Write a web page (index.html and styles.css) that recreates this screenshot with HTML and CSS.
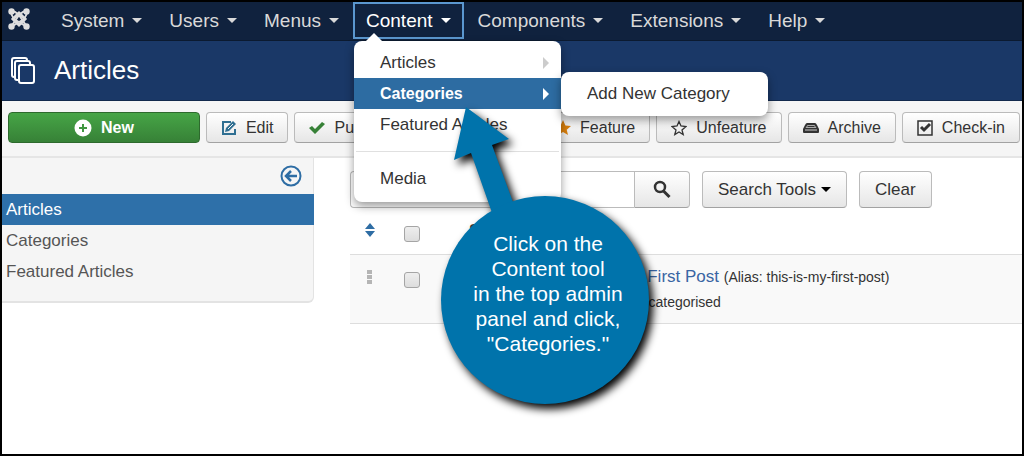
FILE: index.html
```html
<!DOCTYPE html>
<html lang="en">
<head>
    <meta charset="UTF-8">
    <meta name="viewport" content="width=device-width, initial-scale=1.0">
    <title>Articles</title>
    <link rel="stylesheet" href="styles.css">
</head>
<body>
    <nav class="navbar">
        <a href="#" class="brand" aria-label="Joomla">
            <svg width="24" height="24" viewBox="0 0 24 24" fill="none" stroke="#dedede">
                <path d="M4 4q4 0 8 4l8 12M20 4q-4 0-8 4l-8 12M4 4q0 4 3 8l13 8M20 4q0 4-3 8l-13 8" stroke-width="2"/>
                <path d="M12 6l6 6-6 6-6-6z" stroke-width="3"/>
                <g fill="#dedede" stroke="none">
                    <circle cx="4.500" cy="4.500" r="3.200"/>
                    <circle cx="19.500" cy="4.500" r="3.200"/>
                    <circle cx="4.500" cy="19.500" r="3.200"/>
                    <circle cx="19.500" cy="19.500" r="3.200"/>
                </g>
            </svg>
        </a>
        <ul class="nav">
            <li><a href="#" class="nav-link">System<span class="caret"></span></a></li>
            <li><a href="#" class="nav-link">Users<span class="caret"></span></a></li>
            <li><a href="#" class="nav-link">Menus<span class="caret"></span></a></li>
            <li class="open">
                <a href="#" class="nav-link">Content<span class="caret"></span></a>
                <ul class="dropdown">
                    <li><a href="#">Articles<span class="arrow"></span></a></li>
                    <li class="active">
                        <a href="#">Categories<span class="arrow"></span></a>
                        <ul class="submenu">
                            <li><a href="#">Add New Category</a></li>
                        </ul>
                    </li>
                    <li><a href="#">Featured Articles</a></li>
                    <li class="divider"></li>
                    <li><a href="#">Media</a></li>
                </ul>
            </li>
            <li><a href="#" class="nav-link">Components<span class="caret"></span></a></li>
            <li><a href="#" class="nav-link">Extensions<span class="caret"></span></a></li>
            <li><a href="#" class="nav-link">Help<span class="caret"></span></a></li>
        </ul>
    </nav>

    <header class="header">
        <svg width="26" height="28" viewBox="0 0 26 28" fill="#1a3867" stroke="#fff" stroke-width="2">
            <rect x="2" y="1" width="15" height="19" rx="2"/>
            <rect x="5" y="4" width="15" height="19" rx="2"/>
            <rect x="9" y="8" width="15" height="18" rx="2"/>
        </svg>
        <h1>Articles</h1>
    </header>

    <div class="toolbar">
        <button class="btn btn-new">
            <svg width="18" height="18" viewBox="0 0 18 18"><circle cx="9" cy="9" r="8.500" fill="#fff"/><path d="M9 5v8M5 9h8" stroke="#409740" stroke-width="2"/></svg>
            New
        </button>
        <button class="btn">
            <svg width="16" height="16" viewBox="0 0 16 16" fill="none" stroke="#2f6f92" stroke-width="2"><path d="M10 2H2v12h12V9"/><path d="M4 12l1-4 7-7 3 3-7 7z" fill="#2f6f92" stroke="none"/><path d="M7 9l5-5" stroke="#f5f5f5" stroke-width="1"/></svg>
            Edit
        </button>
        <button class="btn">
            <svg width="16" height="16" viewBox="0 0 16 16"><path d="M0 8l3-2 3 3 7-7 3 2-10 10z" fill="#378137"/></svg>
            Publish
        </button>
        <button class="btn">
            <svg width="16" height="16" viewBox="0 0 16 16"><path d="M3 3l10 10M13 3L3 13" stroke="#bd362f" stroke-width="3"/></svg>
            Unpublish
        </button>
        <button class="btn">
            <svg width="16" height="16" viewBox="0 0 16 16"><path d="M8 0l2.400 5.500 5.600.500-4.300 3.700 1.300 5.300-5-3-5 3 1.300-5.300L0 6l5.600-.500z" fill="#d97f0c"/></svg>
            Feature
        </button>
        <button class="btn">
            <svg width="16" height="16" viewBox="0 0 16 16"><path d="M8 1.500l2 4.500 5 .500-4 3.500 1.200 4.500L8 12l-4.200 2.500L5 10 1 6.500 6 6z" fill="none" stroke="#333" stroke-width="1.300"/></svg>
            Unfeature
        </button>
        <button class="btn">
            <svg width="16" height="16" viewBox="0 0 16 16"><path d="M4 3h8q1 0 2 2l2 4v3q0 1-1 1H1q-1 0-1-1V9l2-4q1-2 2-2z" fill="#333"/><path d="M4.500 5h7l2 3h-11z" fill="#aaa"/><path d="M4.500 6.500h7" stroke="#333" stroke-width="1"/><path d="M2 10h12" stroke="#ccc" stroke-width="1"/></svg>
            Archive
        </button>
        <button class="btn">
            <svg width="16" height="16" viewBox="0 0 16 16" fill="none" stroke="#333"><rect x="1" y="1" width="14" height="14" stroke-width="1.500"/><path d="M4 7l3 3 6-6" stroke-width="3"/></svg>
            Check-in
        </button>
    </div>

    <div class="content">
        <aside class="sidebar">
            <button class="toggle" aria-label="Hide sidebar">
                <svg width="22" height="22" viewBox="0 0 22 22" fill="none" stroke="#2e6da4"><circle cx="11" cy="11" r="9.500" stroke-width="2"/><path d="M17 11H6M11 6l-5 5 5 5" stroke-width="2.500"/></svg>
            </button>
            <ul>
                <li class="active"><a href="#">Articles</a></li>
                <li><a href="#">Categories</a></li>
                <li><a href="#">Featured Articles</a></li>
            </ul>
        </aside>

        <main class="main">
            <form class="filters">
                <div class="search">
                    <input type="text" aria-label="Search">
                    <button type="button" class="btn" aria-label="Search">
                        <svg width="20" height="20" viewBox="0 0 20 20" fill="none" stroke="#333"><circle cx="8" cy="7" r="5" stroke-width="2.500"/><path d="M11.500 11l6 6" stroke-width="3"/></svg>
                    </button>
                </div>
                <button type="button" class="btn">Search Tools<span class="caret"></span></button>
                <button type="button" class="btn">Clear</button>
            </form>

            <table class="articles">
                <thead>
                    <tr>
                        <th class="col-order"><svg width="10" height="14" viewBox="0 0 10 14" fill="#2e6da4"><path d="M5 0l5 6H0zM5 14l5-6H0z"/></svg></th>
                        <th class="col-check"><input type="checkbox" aria-label="Check all"></th>
                        <th class="col-status">Status</th>
                        <th>Title</th>
                    </tr>
                </thead>
                <tbody>
                    <tr>
                        <td class="col-order"><svg width="6" height="16" viewBox="0 0 6 16" fill="#b5b5b5"><path d="M0 1h5v4H0zM0 6h5v4H0zM0 11h5v4H0z"/></svg></td>
                        <td class="col-check"><input type="checkbox" aria-label="Check article"></td>
                        <td class="col-status"></td>
                        <td>
                            <a href="#">This is My First Post</a> <small>(Alias: this-is-my-first-post)</small>
                            <div class="category">Category: Uncategorised</div>
                        </td>
                    </tr>
                </tbody>
            </table>
        </main>
    </div>

    <!-- Tutorial callout -->
    <div class="callout">
        <svg class="callout-shape" width="230" height="320" viewBox="0 0 230 320">
            <g fill="#0073ab">
                <path d="M26 4l43 32-17 6 25 68-20 14-26-74-17 7z"/>
                <circle cx="105" cy="197" r="104"/>
            </g>
        </svg>
        <p>Click on the<br>Content tool<br>in the top admin<br>panel and click,<br>"Categories."</p>
    </div>
</body>
</html>
```
FILE: styles.css
```css
* {
    box-sizing: border-box;
}
body {
    margin: 0;
    min-height: 100vh;
    border: 2px solid #000;
    background: #fff;
    color: #333;
    font-family: "Liberation Sans", Arial, sans-serif;
    font-size: 17px;
    line-height: 31px;
    position: relative;
}
ul {
    list-style: none;
    margin: 0;
    padding: 0;
}
a {
    color: inherit;
    text-decoration: none;
}
svg {
    display: block;
    flex: none;
}
.caret {
    border: 5px solid transparent;
    border-top-color: currentColor;
    border-bottom: 0;
}

/* top menu */
.navbar {
    display: flex;
    height: 39px;
    background: #10223e;
    border-bottom: 1px solid #0b1a30;
}
.brand {
    width: 46px;
    padding: 5px;
}
.nav {
    display: flex;
    gap: 1px;
}
.nav > li {
    position: relative;
}
.nav-link {
    display: flex;
    align-items: center;
    gap: 8px;
    height: 37px;
    padding: 0 11px;
    border: 2px solid transparent;
    color: #d9d9d9;
    font-size: 19px;
}
.open .nav-link {
    border-color: #5b97cf;
    color: #fff;
}
.dropdown,
.submenu {
    position: absolute;
    background: #fff;
    border-radius: 8px;
    box-shadow: 0 4px 10px rgba(0, 0, 0, 0.4);
    width: 207px;
}
.dropdown {
    top: 39px;
    left: 1px;
    padding: 6px 0 8px;
    z-index: 2;
}
.dropdown::before {
    content: "";
    position: absolute;
    top: -8px;
    left: 12px;
    border: 8px solid transparent;
    border-top: 0;
    border-bottom-color: #fff;
}
.dropdown li {
    position: relative;
}
.dropdown a {
    display: flex;
    align-items: center;
    justify-content: space-between;
    padding: 0 12px 0 26px;
}
.arrow {
    border: 6px solid transparent;
    border-left-color: #ccc;
    border-right: 0;
}
.dropdown .active > a {
    background: #2d6ca2;
    color: #fff;
    font-size: 16px;
    font-weight: bold;
}
.active .arrow {
    border-left-color: #fff;
}
.divider {
    height: 1px;
    margin: 11px 2px;
    background: #e0e0e0;
}
.submenu {
    top: -6px;
    left: 207px;
    padding: 6px 0 7px;
}

/* page header */
.header {
    display: flex;
    align-items: center;
    gap: 18px;
    height: 60px;
    padding: 0 8px;
    background: #1a3867;
    border-bottom: 1px solid #12294d;
}
.header h1 {
    margin: 0;
    color: #fff;
    font-size: 26px;
    font-weight: normal;
}

/* toolbar */
.toolbar {
    display: flex;
    gap: 6px;
    padding: 11px 2px 13px 6px;
    background: #f5f5f5;
    border-bottom: 2px solid #e5e5e5;
}
.btn {
    display: flex;
    align-items: center;
    justify-content: center;
    gap: 9px;
    height: 31px;
    padding: 0 14px;
    border: 1px solid #bbb;
    border-bottom-color: #a2a2a2;
    border-radius: 4px;
    background: linear-gradient(#fff, #e6e6e6);
    color: #333;
    font-family: inherit;
    font-size: 16px;
    white-space: nowrap;
    cursor: pointer;
}
.btn-new {
    width: 192px;
    border-color: #2d6a2d;
    background: linear-gradient(#46a546, #378137);
    color: #fff;
    font-weight: bold;
}

/* columns */
.content {
    display: flex;
    align-items: flex-start;
    gap: 36px;
}
.sidebar {
    width: 312px;
    padding-bottom: 14px;
    background: #f5f5f5;
    border: solid #e3e3e3;
    border-width: 0 1px 2px 0;
    border-radius: 0 0 6px 0;
}
.toggle {
    display: block;
    margin: 0 11px 0 auto;
    padding: 7px 0;
    border: 0;
    background: none;
}
.sidebar li {
    padding-left: 4px;
    color: #555;
}
.sidebar .active {
    margin-right: -1px;
    background: #2e70a9;
    color: #fff;
}
.main {
    flex: 1;
    padding-top: 13px;
}
.filters {
    display: flex;
    gap: 12px;
}
.filters .btn {
    height: 37px;
    padding: 0 15px;
    font-size: 17px;
    gap: 5px;
}
.search {
    display: flex;
    width: 340px;
}
.search input {
    flex: 1;
    min-width: 0;
    border: 1px solid #bbb;
    border-right: 0;
    border-radius: 4px 0 0 4px;
    font-size: 17px;
}
.search .btn {
    width: 56px;
    border-radius: 0 4px 4px 0;
}
.filters .caret {
    border-top-color: #000;
}

/* article list */
.articles {
    width: 100%;
    border-collapse: collapse;
}
.articles th,
.articles td {
    padding: 8px 0;
    border-bottom: 1px solid #ddd;
    text-align: left;
    vertical-align: top;
    line-height: 30px;
}
.articles td {
    padding: 7px 0 11px;
    background: #f9f9f9;
}
.articles .col-order {
    width: 40px;
}
.col-order svg {
    margin: 7px auto 0;
}
.articles .col-check {
    width: 44px;
    text-align: center;
}
.articles .col-status {
    width: 132px;
    padding-left: 35px;
}
.articles a {
    color: #3965a3;
}
.articles small {
    font-size: 14px;
}
.category {
    font-size: 14px;
    line-height: 20px;
}
input[type="checkbox"] {
    appearance: none;
    width: 16px;
    height: 16px;
    margin: 10px 0 0;
    border: 1px solid #a5a5a5;
    border-radius: 3px;
    background: linear-gradient(#eee, #ddd);
    display: inline-block;
    vertical-align: top;
}

/* callout */
.callout {
    position: absolute;
    top: 101px;
    left: 438px;
    width: 208px;
    z-index: 3;
    pointer-events: none;
}
.callout-shape {
    position: absolute;
    overflow: visible;
    filter: drop-shadow(4px 5px 4px #000);
}
.callout p {
    position: relative;
    margin: 0;
    padding: 128px 0 0 8px;
    color: #fff;
    font-size: 21px;
    line-height: 25px;
    text-align: center;
}
```
